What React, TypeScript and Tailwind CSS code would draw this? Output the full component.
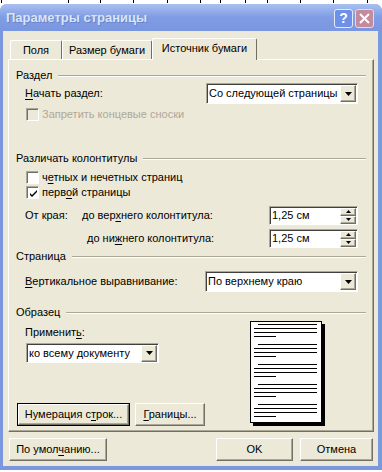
import React from "react";

const U = ({ c }: { c: string }) => <span className="underline underline-offset-[2px]">{c}</span>;

const raised =
  "border border-t-white border-l-white border-r-[#716f64] border-b-[#716f64] shadow-[inset_-1px_-1px_0_#aca899]";
const sunken =
  "border border-t-[#aca899] border-l-[#aca899] border-r-white border-b-white shadow-[inset_1px_1px_0_#404040]";

const Legend = ({ label, mt }: { label: string; mt: string }) => (
  <div className={`${mt} h-[13px] flex items-center`}>
    <span className="leading-[13px]">{label}</span>
    <div className="flex-1 ml-[6px] h-[2px] border-t border-t-[#aca899] border-b border-b-white" />
  </div>
);

const Arrow = () => (
  <div className={`w-[16px] h-[17px] bg-[#ece9d8] flex items-center justify-center ${raised}`}>
    <svg width="7" height="4" viewBox="0 0 7 4">
      <path d="M0 0h7L3.5 4z" fill="#000" />
    </svg>
  </div>
);

const Select = ({ value, className }: { value: string; className: string }) => (
  <div className={`flex items-center bg-white pr-[1px] ${sunken} ${className}`}>
    <span className="flex-1 pl-[2px] whitespace-nowrap overflow-hidden leading-[13px]">{value}</span>
    <Arrow />
  </div>
);

const Spin = ({ value }: { value: string }) => (
  <div className={`ml-auto mr-[8px] w-[89px] h-[19px] flex items-center bg-white pr-[1px] ${sunken}`}>
    <span className="flex-1 pl-[2px] leading-[13px]">{value}</span>
    <div className="flex flex-col w-[16px]">
      {[0, 1].map((i) => (
        <div key={i} className={`h-[8px] bg-[#ece9d8] flex items-center justify-center ${raised}`}>
          <svg width="5" height="3" viewBox="0 0 5 3">
            <path d={i === 0 ? "M0 3h5L2.5 0z" : "M0 0h5L2.5 3z"} fill="#000" />
          </svg>
        </div>
      ))}
    </div>
  </div>
);

const Check = ({ checked, disabled, children }: { checked?: boolean; disabled?: boolean; children: React.ReactNode }) => (
  <div className="h-[13px] flex items-center ml-[10px]">
    <div
      className={`w-[13px] h-[13px] flex items-center justify-center border border-t-[#aca899] border-l-[#aca899] border-r-white border-b-white shadow-[inset_1px_1px_0_#716f64] ${
        disabled ? "bg-[#ece9d8]" : "bg-white"
      }`}
    >
      {checked && (
        <svg width="7" height="7" viewBox="0 0 7 7" className="ml-[1px] mt-[1px]">
          <path d="M0 3l2 2 5-5v2l-5 5-2-2z" fill="#000" />
        </svg>
      )}
    </div>
    <span className={`ml-[3px] leading-[13px] ${disabled ? "text-[#aca899]" : ""}`}>{children}</span>
  </div>
);

const Btn = ({ children, className, def }: { children: React.ReactNode; className: string; def?: boolean }) =>
  def ? (
    <div className={`border border-black ${className}`}>
      <div className={`w-full h-full flex items-center justify-center ${raised}`}>{children}</div>
    </div>
  ) : (
    <div className={`flex items-center justify-center ${raised} ${className}`}>{children}</div>
  );

const PagePreview = () => (
  <div className="w-[72px] h-[102px] bg-white border border-black shadow-[3px_3px_0_#000] pt-[2px] pl-[3px] pr-[4px] flex flex-col gap-[7px]">
    {[0, 1, 2, 3, 4].map((g) => (
      <div key={g} className="flex flex-col gap-[3px]">
        <div className="h-[1px] bg-black ml-[4px]" />
        <div className="h-[1px] bg-black" />
        <div className="h-[1px] bg-black" />
        <div className="h-[1px] bg-black w-[22px]" />
      </div>
    ))}
  </div>
);

const App: React.FC = () => {
  return (
    <div className="w-[382px] h-[472px] bg-white flex flex-col font-['Liberation_Sans',Arial,sans-serif] text-[11px] text-black">
      <div className="h-[4px] relative">
        <svg width="382" height="4" className="block">
          {[1, 68, 100, 133, 167, 200, 220, 245, 267, 300, 333, 367].map((x) => (
            <line key={x} x1={x + 0.5} x2={x + 0.5} y1="0" y2="3" stroke="#000" />
          ))}
        </svg>
      </div>
      <div className="h-[466px] rounded-t-[7px] bg-[#7b97e0] flex flex-col">
        <div className="h-[27px] rounded-t-[7px] bg-gradient-to-b from-[#a9c0f0] via-[#7f9ce4] to-[#7a96e0] flex items-center pl-[6px] pr-[8px]">
          <span className="font-bold text-[13px] text-[#d8e4f8] [text-shadow:1px_1px_0_#6a84c8]">Параметры страницы</span>
          <div className="ml-auto flex gap-[2px] pt-[1px]">
            <div className="w-[19px] h-[19px] rounded-[3px] border border-[#e4ecfc] bg-[#6f90e8] flex items-center justify-center text-white font-bold text-[14px]">
              ?
            </div>
            <div className="w-[19px] h-[19px] rounded-[3px] border border-[#ead8e0] bg-[#c38b9b] flex items-center justify-center">
              <svg width="11" height="11" viewBox="0 0 11 11">
                <path d="M1 1l9 9M10 1l-9 9" stroke="#fff" strokeWidth="2" />
              </svg>
            </div>
          </div>
        </div>
        <div className="flex-1 ml-[3px] mr-[4px] mb-[4px] bg-[#ece9d8] pt-[7px] pl-[5px] pr-[4px] flex flex-col">
          <div className="h-[21px] flex items-end pl-[2px]">
            <div className="w-[52px] h-[19px] flex items-center justify-center rounded-t-[2px] border-t border-l border-white border-r border-r-[#716f64]">
              Поля
            </div>
            <div className="w-[90px] h-[19px] flex items-center justify-center rounded-t-[2px] border-t border-l border-white border-r border-r-[#716f64]">
              Размер бумаги
            </div>
            <div className="relative z-10 w-[105px] h-[22px] -mb-[1px] bg-[#ece9d8] flex items-center justify-center pb-[3px] rounded-t-[2px] border-t border-l border-white border-r border-r-[#716f64]">
              Источник бумаги
            </div>
          </div>
          <div className="h-[373px] border border-t-white border-l-white border-r-[#716f64] border-b-[#716f64] shadow-[inset_-1px_-1px_0_#aca899] pl-[7px] pr-[7px] flex flex-col">
            <Legend label="Раздел" mt="mt-[9px]" />
            <div className="mt-[1px] h-[21px] flex items-center">
              <span className="ml-[9px]">
                <U c="Н" />
                ачать раздел:
              </span>
              <Select className="ml-auto mr-[8px] w-[152px] h-[21px]" value="Со следующей страницы" />
            </div>
            <div className="mt-[4px]">
              <Check disabled>Запретить концевые сноски</Check>
            </div>
            <Legend label="Различать колонтитулы" mt="mt-[31px]" />
            <div className="mt-[6px]">
              <Check>
                ч<U c="е" />
                тных и нечетных страниц
              </Check>
            </div>
            <div className="mt-[2px]">
              <Check checked>
                перв<U c="о" />й страницы
              </Check>
            </div>
            <div className="mt-[7px] h-[19px] flex items-center">
              <span className="ml-[9px] w-[57px]">От края:</span>
              <span className="w-[136px]">
                до вер<U c="х" />
                него колонтитула:
              </span>
              <Spin value="1,25 см" />
            </div>
            <div className="mt-[4px] h-[19px] flex items-center">
              <span className="ml-[71px] w-[136px]">
                до ни<U c="ж" />
                него колонтитула:
              </span>
              <Spin value="1,25 см" />
            </div>
            <Legend label="Страница" mt="mt-[2px]" />
            <div className="mt-[8px] h-[21px] flex items-center">
              <span className="ml-[9px]">
                <U c="В" />
                ертикальное выравнивание:
              </span>
              <Select className="ml-auto mr-[8px] w-[153px] h-[21px]" value="По верхнему краю" />
            </div>
            <Legend label="Образец" mt="mt-[14px]" />
            <div className="mt-[2px] flex">
              <div className="ml-[9px] w-[225px] flex flex-col">
                <span className="mt-[5px] h-[13px] leading-[13px]">
                  Применит<U c="ь" />:
                </span>
                <Select className="mt-[4px] ml-[1px] w-[133px] h-[20px]" value="ко всему документу" />
                <div className="mt-[40px] -ml-[8px] flex gap-[5px]">
                  <Btn def className="w-[113px] h-[23px]">
                    <span>
                      Нумерация с<U c="т" />
                      рок...
                    </span>
                  </Btn>
                  <Btn className="w-[70px] h-[23px]">
                    <span>
                      <U c="Г" />
                      раницы...
                    </span>
                  </Btn>
                </div>
              </div>
              <PagePreview />
            </div>
          </div>
          <div className="mt-[6px] h-[23px] flex">
            <Btn className="ml-[1px] w-[98px] h-[23px]">
              <span>
                По умол<U c="ч" />
                анию...
              </span>
            </Btn>
            <Btn className="ml-auto w-[77px] h-[23px]">OK</Btn>
            <Btn className="ml-[7px] mr-[1px] w-[73px] h-[23px]">Отмена</Btn>
          </div>
        </div>
      </div>
    </div>
  );
};

export default App;
